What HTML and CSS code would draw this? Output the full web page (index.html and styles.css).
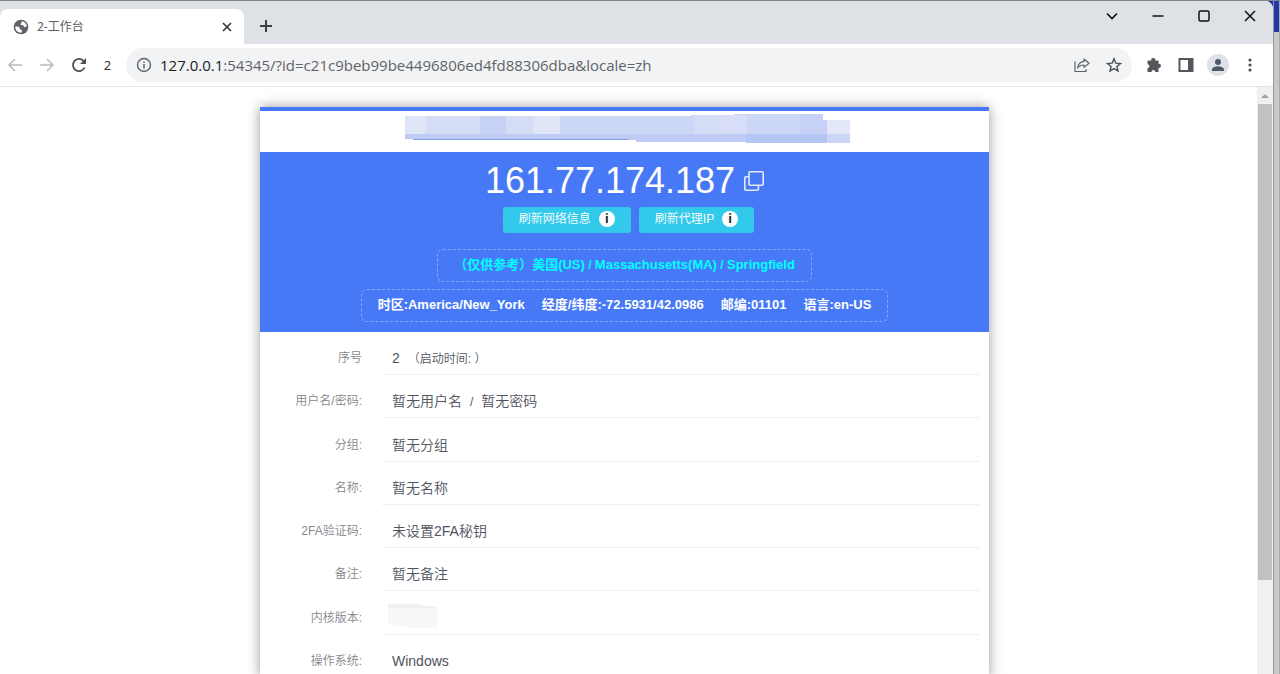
FILE: index.html
```html
<!DOCTYPE html>
<html lang="zh">
<head>
<meta charset="utf-8">
<title>2-工作台</title>
<link rel="stylesheet" href="styles.css">
</head>
<body>
<div class="desktop">
  <div class="window">
    <header class="titlebar">
      <div class="tab">
        <svg class="tab-icon" width="16" height="16" viewBox="0 0 16 16"><circle cx="8" cy="8" r="7.3" fill="#5f6368"/><path d="M8.6 2.2c2.7.3 4.8 2.3 5.2 4.9-.7.8-1.8 1.4-2.6.9-.6-.4-.3-1.400-1-1.700-.9-.4-2.200.2-2.600-.7-.3-.8.7-1.100.9-1.800.1-.6-.1-1.100.1-1.600zM2.200 7.600c1.600-.2 3.700-.1 4.300 1 .4.8-.1 1.500.6 2 .6.4 1.800.1 1.900 1 .1.8-.6 1.400-.5 2.200-3.500.3-6.300-2.500-6.300-6.200z" fill="#fff"/></svg>
        <span class="tab-title">2-工作台</span>
        <button class="plain" aria-label="关闭标签页"><svg width="16" height="16" viewBox="0 0 16 16"><path d="M4 4l8 8M12 4l-8 8" stroke="#333" stroke-width="1.600"/></svg></button>
      </div>
      <button class="plain new-tab" aria-label="新标签页"><svg width="16" height="16" viewBox="0 0 16 16"><path d="M8 2v12M2 8h12" stroke="#3c4043" stroke-width="2"/></svg></button>
      <div class="window-buttons">
        <button class="plain" aria-label="搜索标签页"><svg width="14" height="14" viewBox="0 0 14 14"><path d="M2 4.500l5 5 5-5" fill="none" stroke="#111" stroke-width="1.600"/></svg></button>
        <button class="plain" aria-label="最小化"><svg width="14" height="14" viewBox="0 0 14 14"><path d="M1.500 7h11" stroke="#111" stroke-width="1.400"/></svg></button>
        <button class="plain" aria-label="最大化"><svg width="14" height="14" viewBox="0 0 14 14"><rect x="2" y="2" width="10" height="10" rx="1.500" fill="none" stroke="#111" stroke-width="1.500"/></svg></button>
        <button class="plain" aria-label="关闭"><svg width="14" height="14" viewBox="0 0 14 14"><path d="M2 2l10 10M12 2L2 12" stroke="#111" stroke-width="1.500"/></svg></button>
      </div>
    </header>
    <nav class="toolbar">
      <div class="nav-buttons">
        <button class="plain" aria-label="后退"><svg width="16" height="16" viewBox="0 0 16 16"><path d="M15 8H2M8 2L2 8l6 6" fill="none" stroke="#babcbe" stroke-width="1.500"/></svg></button>
        <button class="plain" aria-label="前进"><svg width="16" height="16" viewBox="0 0 16 16"><path d="M1 8h13M8 2l6 6-6 6" fill="none" stroke="#babcbe" stroke-width="1.500"/></svg></button>
        <button class="plain" aria-label="重新加载"><svg width="16" height="16" viewBox="0 0 16 16"><path d="M13.600 10.500A6.100 6.100 0 1 1 12.500 3.800" fill="none" stroke="#4c5054" stroke-width="1.800"/><path d="M15 1v6H9z" fill="#4c5054"/></svg></button>
      </div>
      <span class="profile-number">2</span>
      <div class="address">
        <svg width="16" height="16" viewBox="0 0 16 16"><circle cx="8" cy="8" r="6.500" fill="none" stroke="#5f6368" stroke-width="1.400"/><path d="M8 7v4.500M8 4.500v1.500" stroke="#5f6368" stroke-width="1.500"/></svg>
        <span class="url"><span class="host">127.0.0.1</span>:54345/?id=c21c9beb99be4496806ed4fd88306dba&amp;locale=zh</span>
        <button class="plain" aria-label="分享"><svg width="16" height="16" viewBox="0 0 16 16"><path d="M1 4.500V14.500H12V12M10 2l5 4.200-5 4.200V8C7 8 5 9 3.700 11 4 7.500 6 4.900 10 4.400z" fill="none" stroke="#5f6368" stroke-width="1.200" stroke-linejoin="round"/></svg></button>
        <button class="plain" aria-label="收藏"><svg width="16" height="16" viewBox="0 0 16 16"><path d="M8 1.800l1.800 4.300 4.700.4-3.600 3 1.100 4.600-4-2.500-4 2.500 1.100-4.600-3.600-3 4.700-.4z" fill="none" stroke="#4c5054" stroke-width="1.400"/></svg></button>
      </div>
      <div class="tools">
        <button class="plain" aria-label="扩展程序"><svg width="16" height="16" viewBox="0 0 16 16"><path d="M2 3.500h3.300a2 2 0 1 1 3.900 0H12.500v3.400a2 2 0 1 1 0 3.900V15H9.300a1.900 1.900 0 1 0-3.800 0H1.500V11a1.900 1.900 0 1 0 0-3.800V4z" fill="#54585c"/></svg></button>
        <button class="plain" aria-label="侧边栏"><svg width="16" height="16" viewBox="0 0 16 16"><path d="M.5 1h15v14H.5zM2.500 3v10H10V3z" fill="#54585c" fill-rule="evenodd"/></svg></button>
        <button class="plain avatar" aria-label="个人资料"><svg width="22" height="22" viewBox="0 0 22 22"><circle cx="11" cy="11" r="11" fill="#dee1e6"/><circle cx="11" cy="8" r="3" fill="#4e586b"/><path d="M5 17v-1.500c0-2 4-3.200 6-3.200s6 1.200 6 3.200V17z" fill="#4e586b"/></svg></button>
        <button class="plain" aria-label="菜单"><svg width="16" height="16" viewBox="0 0 16 16" fill="#4c5054"><circle cx="8" cy="3" r="1.600"/><circle cx="8" cy="8" r="1.600"/><circle cx="8" cy="13" r="1.600"/></svg></button>
      </div>
    </nav>
    <div class="viewport">
      <main class="page">
        <section class="card">
          <div class="notice">
            <svg width="446" height="32" viewBox="0 0 446 32"><path d="M0 4H286V3H329V2H418V8H445V31H341V30H231V28H8V27H0z" fill="#ccd6f5"/><path d="M0 4H21V22H0zM128 4H155V22H128z" fill="#dfe5f7"/><path d="M21 4H75V22H21zM101 4H128V22H101zM289 3H316V22H289z" fill="#d5ddf6"/><path d="M75 4H101V22H75zM395 2H418V8H422V22H395z" fill="#c6d1f5"/><path d="M316 3H342V22H316z" fill="#d9def8"/><path d="M422 8H445V22H422z" fill="#e2e7fa"/><path d="M0 22H445V31H341V30H231V28H8V27H0z" fill="#bfcbf5"/><path d="M341 22H422V31H341z" fill="#b5c5f4"/><path d="M422 22H445V31H422z" fill="#cbd5f8"/><path d="M8 27H223V28H8z" fill="#80a0ee"/></svg>
          </div>
          <div class="hero">
            <div class="ip-line">
              <h1 class="ip">161.77.174.187</h1>
              <button class="plain" aria-label="复制"><svg width="20" height="20" viewBox="0 0 20 20"><path d="M6 .8H18.200Q19.200.8 19.200 1.800V13.200Q19.200 14.200 18.200 14.200H6Q5 14.200 5 13.200V1.800Q5 .8 6 .8zM5 5.800H1.800Q.8 5.800.8 6.800V18.200Q.8 19.200 1.800 19.200H13.400Q14.400 19.200 14.400 18.200V14.200" fill="none" stroke="#e3eaff" stroke-width="1.600"/></svg></button>
            </div>
            <div class="actions">
              <button class="action">刷新网络信息<span class="info">i</span></button>
              <button class="action">刷新代理IP<span class="info">i</span></button>
            </div>
            <div class="pill location">（仅供参考）美国(US)<span class="divider"> / </span>Massachusetts(MA)<span class="divider"> / </span>Springfield</div>
            <div class="pill details"><span>时区:America/New_York</span><span>经度/纬度:-72.5931/42.0986</span><span>邮编:01101</span><span>语言:en-US</span></div>
          </div>
          <dl class="rows">
            <div class="row"><dt>序号</dt><dd>2<span class="started">（启动时间: ）</span></dd></div>
            <div class="row"><dt>用户名/密码:</dt><dd>暂无用户名<span class="slash">/</span>暂无密码</dd></div>
            <div class="row"><dt>分组:</dt><dd>暂无分组</dd></div>
            <div class="row"><dt>名称:</dt><dd>暂无名称</dd></div>
            <div class="row"><dt>2FA验证码:</dt><dd>未设置2FA秘钥</dd></div>
            <div class="row"><dt>备注:</dt><dd>暂无备注</dd></div>
            <div class="row"><dt>内核版本:</dt><dd class="masked"><svg width="50" height="24" viewBox="0 0 50 24"><path d="M0 0H32L36 2H44L50 4V24H25L0 21z" fill="#f8f8f8"/><path d="M0 0H32L36 2H44L50 4H0z" fill="#f0f0f0"/></svg></dd></div>
            <div class="row"><dt>操作系统:</dt><dd>Windows</dd></div>
          </dl>
        </section>
      </main>
      <div class="scrollbar">
        <svg width="16" height="17" viewBox="0 0 16 17"><path d="M4 11l4-4 4 4z" fill="#a3a3a3"/></svg>
        <div class="thumb"></div>
      </div>
    </div>
  </div>
  <div class="behind"><div class="behind-top"></div></div>
</div>
</body>
</html>
```
FILE: styles.css
```css
* { box-sizing: border-box; }
body { margin: 0; font-family: "Liberation Sans", "Noto Sans CJK SC", sans-serif; }
.plain { display: flex; padding: 0; border: 0; background: none; }
svg { display: block; flex: none; }

.desktop { display: flex; height: 100vh; overflow: hidden; background: linear-gradient(to left, #2038a8 12px, #dee1e6 12px) top / 100% 31px no-repeat, #c8c8c8; border-top: 1px solid #85858f; }
.window { flex: 1; min-width: 0; display: flex; flex-direction: column; background: #fff; border-radius: 0 8px 0 0; overflow: hidden; }
.behind { width: 7px; background: #c8c8c8; border-left: 1px solid #999; border-right: 1px solid #aaa; }
.behind-top { height: 31px; background: #2038a8; }

.titlebar { flex: none; display: flex; align-items: flex-start; height: 43px; background: #dee1e6; }
.tab { display: flex; align-items: center; gap: 8px; width: 244px; height: 35px; margin-top: 8px; padding: 0 9px 0 13px; background: #fff; border-radius: 8px 8px 0 0; }
.tab-title { flex: 1; font: 400 12px/16px "Noto Sans", "Noto Sans CJK SC", sans-serif; color: #5a5d61; }
.new-tab { margin: 17px 0 0 14px; }
.window-buttons { display: flex; gap: 32px; margin: 8px 16px 0 auto; }

.toolbar { flex: none; display: flex; align-items: center; height: 43px; padding: 0 15px 0 7px; border-bottom: 1px solid #e3e5e8; }
.nav-buttons { display: flex; gap: 16px; }
.profile-number { width: 39px; padding-left: 2px; text-align: center; font: 13px/16px "Noto Sans", sans-serif; color: #333; }
.address { flex: 1; display: flex; align-items: center; gap: 16px; height: 34px; padding: 0 10px; border-radius: 17px; background: #f1f3f4; }
.url { flex: 1; margin-left: -8px; font: 15px/20px "Open Sans", "Noto Sans", sans-serif; color: #5f6368; }
.host { color: #202124; }
.tools { display: flex; align-items: center; gap: 16px; margin-left: 14px; }
.avatar { margin: 0 -3px; }

.viewport { flex: 1; min-height: 0; display: flex; overflow: hidden; }
.page { flex: 1; padding: 20px 8px 0 0; }
.card { max-width: 729px; min-height: 100%; margin: 0 auto; background: #fff; border-top: 4px solid #4779f6; box-shadow: 0 0 12px rgba(0, 0, 0, .4); }
.scrollbar { width: 16px; background: #f0f0f0; }
.thumb { height: 476px; margin: 0 1px; background: #c1c1c1; }

.notice { display: flex; justify-content: center; height: 41px; padding: 1px 0 0 7px; }
.hero { display: flex; flex-direction: column; align-items: center; height: 180px; padding-top: 9px; background: #4779f6; color: #fff; }
.ip-line { display: flex; align-items: center; gap: 9px; }
.ip { margin: 0; font-size: 36px; line-height: 40px; font-weight: 400; }
.actions { display: flex; gap: 8px; margin-top: 6px; padding-left: 8px; }
.action { display: flex; align-items: center; gap: 8px; height: 26px; padding: 0 16px 2px; border: 0; border-radius: 3px; background: #33c9eb; color: #fff; font: 350 12px/18px "Liberation Sans", "Noto Sans CJK SC", sans-serif; }
.info { width: 16px; height: 16px; border-radius: 50%; background: #fff; color: #222; font: 700 12px/16px "Open Sans", sans-serif; }
.pill { display: flex; height: 33px; padding: 0 16px; border: 1px dashed #87a7fa; border-radius: 6px; font-size: 13px; line-height: 30px; font-weight: 700; white-space: pre; }
.location { margin-top: 16px; color: #0ff; }
.divider { font-size: 12px; }
.details { gap: 17px; margin-top: 7px; }

.rows { display: grid; grid-auto-rows: 1fr; min-height: 346px; margin: 0; padding-right: 10px; color: #50545e; }
.row { display: flex; font-size: 14px; line-height: 52px; font-weight: 350; min-height: 0; }
.row dt { width: 102px; height: 43px; margin-right: 20px; text-align: right; font-size: 12px; line-height: 53px; color: #85878c; }
.row dd { flex: 1; height: 43px; margin: 0; padding-left: 10px; border-bottom: 1px solid #efefef; }
.started { margin-left: 8px; font-size: 12px; }
.slash { margin: 0 8px; font-size: 12px; }
.row .masked { padding: 12px 0 0 6px; }
```
